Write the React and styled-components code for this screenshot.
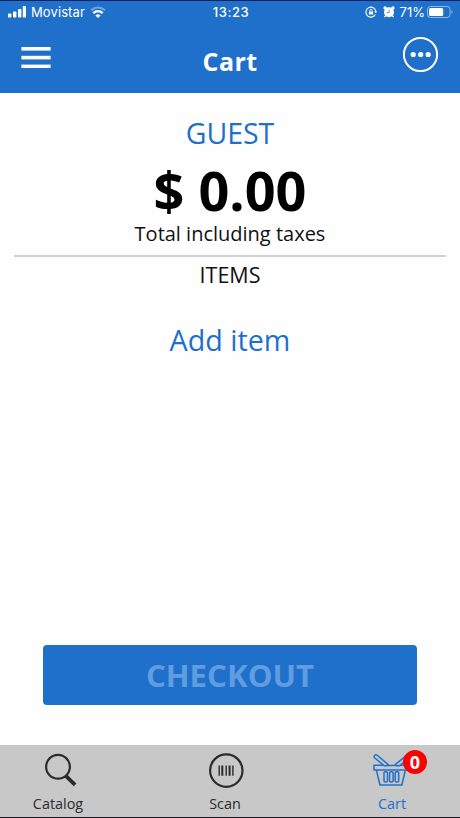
import React from 'react';
import styled, { createGlobalStyle } from 'styled-components'

const BLUE = '#1f70ca'

const GlobalStyle = createGlobalStyle`
  * {
    box-sizing: border-box;
  }

  body {
    margin: 0;
    background: #fff;
    font-family: "Open Sans", "Noto Sans", sans-serif;
  }
`

const Screen = styled.div`
  display: flex;
  flex-direction: column;
  width: 460px;
  height: 818px;
  overflow: hidden;
  background: #fefefe;
  border-top: 1px solid #10205a;
  border-bottom: 1px solid #1c1c1e;
`

const Header = styled.header`
  height: 92px;
  flex: none;
  background: ${BLUE};
  color: #fff;
`

const StatusBar = styled.div`
  display: grid;
  grid-template-columns: 1fr auto 1fr;
  align-items: center;
  height: 22px;
  padding: 0 6px 0 8px;
  font-family: Inter, sans-serif;
  font-size: 13px;
  line-height: 22px;
`

const StatusGroup = styled.div`
  display: flex;
  align-items: center;
  justify-content: ${({ $end }) => $end ? 'flex-end' : 'flex-start'};

  svg {
    display: block;
    flex: none;
  }
`

const StatusIcons = styled.div`
  display: flex;
  gap: 6px;
`

const Carrier = styled.span`
  margin: 0 5px 0 5px;
  letter-spacing: 0.1px;
`

const Clock = styled.span`
  font-weight: 500;
  letter-spacing: 0.55px;
`

const Percent = styled.span`
  margin: 0 2px 0 5px;
`

const NavBar = styled.div`
  display: grid;
  grid-template-columns: 1fr auto 1fr;
  align-items: start;
  padding: 13px 21px 0;
`

const IconButton = styled.button`
  display: block;
  margin-top: ${({ $top }) => $top || 0}px;
  padding: 0;
  border: 0;
  background: none;
  color: inherit;
  justify-self: ${({ $end }) => $end ? 'end' : 'start'};

  svg {
    display: block;
  }
`

const Title = styled.h1`
  margin: 8px 0 0;
  font-size: 25px;
  font-weight: 700;
  line-height: 34px;
  letter-spacing: 0.4px;
`

const Content = styled.main`
  display: flex;
  flex-direction: column;
  align-items: center;
  flex: 1;
  padding: 20px 14px 0;
`

const LinkText = styled.a`
  color: ${BLUE};
  font-size: ${({ $size }) => $size}px;
  line-height: 40px;
`

const Total = styled.div`
  margin-top: 7px;
  color: #000;
  font-size: 54px;
  font-weight: 700;
  line-height: 60px;
`

const Caption = styled.div`
  color: #111;
  font-size: ${({ $size }) => $size}px;
  line-height: 27px;
`

const Divider = styled.hr`
  width: 100%;
  height: 2px;
  margin: 8px 0 4px;
  border: 0;
  background: #d2d2d2;
`

const AddItem = styled.div`
  margin-top: 32px;
`

const Checkout = styled.button`
  width: 374px;
  height: 60px;
  margin: auto 0 40px;
  padding: 0;
  border: 0;
  border-radius: 4px;
  background: ${BLUE};
  color: #5f9ce0;
  font-family: inherit;
  font-size: 31.2px;
  font-weight: 700;
  line-height: 60px;
`

const TabBar = styled.nav`
  display: flex;
  gap: 67px;
  flex: none;
  height: 72px;
  padding: 0 8px;
  background: #c8c8c8;
`

const Tab = styled.div`
  position: relative;
  display: flex;
  flex-direction: column;
  align-items: center;
  width: 100px;
  padding-top: 7px;
  color: ${({ $active }) => $active ? BLUE : '#2b2b2b'};
  font-size: 14.4px;
  line-height: 20px;

  svg {
    display: block;
    margin-bottom: 6px;
  }
`

const Badge = styled.span`
  position: absolute;
  top: 5px;
  left: 61px;
  width: 24px;
  height: 24px;
  border-radius: 50%;
  background: #fe0000;
  color: #fff;
  font-size: 18px;
  font-weight: 700;
  line-height: 24px;
  text-align: center;
`

function SignalIcon() {
  return (
    <svg width="18" height="14" viewBox="0 0 18 14" fill="currentColor">
      <rect x="0" y="8.5" width="3.4" height="4" rx="0.8" />
      <rect x="5" y="6.5" width="3.4" height="6" rx="0.8" />
      <rect x="10" y="4" width="3.4" height="8.5" rx="0.8" />
      <rect x="14.8" y="1" width="3.2" height="11.5" rx="0.8" />
    </svg>
  )
}

function WifiIcon() {
  return (
    <svg width="16" height="14" viewBox="0 0 16 14" fill="none" stroke="currentColor" strokeWidth="2">
      <path d="M1 5.2a10.2 10.2 0 0 1 14 0" opacity="0.35" />
      <path d="M3.3 8.1a6.8 6.8 0 0 1 9.4 0" strokeWidth="2.3" />
      <path d="M8 13 5.4 10.4a3.8 3.8 0 0 1 5.2 0z" fill="currentColor" stroke="none" />
    </svg>
  )
}

function RotationLockIcon() {
  return (
    <svg width="12" height="12" viewBox="0 0 12 12" fill="none" stroke="currentColor">
      <path d="M10.3 8.6a5 5 0 1 1 .6-3.2" strokeWidth="1.1" />
      <path d="M9.2 5.2h2.8l-1.2 2z" fill="currentColor" stroke="none" />
      <rect x="3.9" y="5.4" width="4.2" height="3.2" rx="0.4" fill="currentColor" stroke="none" />
      <path d="M4.8 5.6V4.5a1.2 1.2 0 0 1 2.4 0v1.1" strokeWidth="0.9" />
    </svg>
  )
}

function AlarmIcon() {
  return (
    <svg width="12" height="12" viewBox="0 0 12 12" fill="currentColor">
      <circle cx="6" cy="6.3" r="5" />
      <circle cx="2.1" cy="2" r="1.7" />
      <circle cx="9.9" cy="2" r="1.7" />
      <path d="m2.7 9.6-1.2 1.6M9.3 9.6l1.2 1.6" stroke="currentColor" strokeWidth="1.4" />
      <path d="M6.2 3.6v3H3.8" fill="none" stroke={BLUE} strokeWidth="0.7" />
    </svg>
  )
}

function BatteryIcon() {
  return (
    <svg width="27" height="12" viewBox="0 0 27 12">
      <rect x="0.5" y="0.5" width="22.6" height="11" rx="3" fill="none" stroke="#fff" strokeOpacity="0.5" />
      <rect x="2" y="2" width="14.2" height="8" rx="1.5" fill="#fff" />
      <path d="M24.5 4.2c1.5.5 1.5 3.1 0 3.6z" fill="#fff" fillOpacity="0.5" />
    </svg>
  )
}

function MenuIcon() {
  return (
    <svg width="30" height="24" viewBox="0 0 30 24" fill="#fff">
      <rect x="0.4" y="1" width="29.2" height="3.6" />
      <rect x="0.4" y="9.8" width="29.2" height="3.6" />
      <rect x="0.4" y="18.6" width="29.2" height="3.4" />
    </svg>
  )
}

function MoreIcon() {
  return (
    <svg width="36" height="36" viewBox="0 0 36 36" fill="#fff">
      <circle cx="17.5" cy="18.5" r="16.6" fill="none" stroke="#fff" strokeWidth="2" />
      <circle cx="10.2" cy="18.5" r="2.6" />
      <circle cx="17.7" cy="18.5" r="2.6" />
      <circle cx="25.2" cy="18.5" r="2.6" />
    </svg>
  )
}

function SearchIcon() {
  return (
    <svg width="40" height="36" viewBox="0 0 40 36" fill="none" stroke="#2b2b2b">
      <circle cx="20" cy="14.8" r="11.9" strokeWidth="2.2" />
      <path d="m27.8 23.8 9.3 9" strokeWidth="3.8" />
    </svg>
  )
}

function ScanIcon() {
  return (
    <svg width="38" height="36" viewBox="0 0 38 36" fill="none" stroke="#2b2b2b">
      <circle cx="20.3" cy="18.6" r="16.2" strokeWidth="2.2" />
      <path d="M13.2 13.4v10.4M20.2 13.4v10.4M26.9 13.4v10.4" strokeWidth="1.4" />
      <path d="M16.3 13.4v10.4M23.6 13.4v10.4" strokeWidth="2" />
    </svg>
  )
}

function BasketIcon() {
  return (
    <svg width="38" height="36" viewBox="0 0 38 36" fill="none" stroke={BLUE} strokeWidth="1.5" strokeLinejoin="round">
      <path d="M10.3 13 1.8 6a1.8 1.8 0 0 1 2.4-2.7L15.2 12.6l-1.2 1.2h-2.8z" />
      <path d="M27.5 13 36 6a1.8 1.8 0 0 0-2.4-2.7L22.2 12.6l1.2 1.2h2.8z" />
      <path d="M10.3 13.2H1v4.9h33.8v-4.9h-7.3M15 13.6h7.4" />
      <path d="m3.4 18.1 3.6 14.9h21.8l3.6-14.9" />
      <rect x="11" y="19.8" width="3.5" height="10.2" rx="1.3" />
      <rect x="16.6" y="19.8" width="3.5" height="10.2" rx="1.3" />
      <rect x="22.2" y="19.8" width="3.5" height="10.2" rx="1.3" />
    </svg>
  )
}

export default function App() {
  const itemCount = 0

  return (
    <Screen>
      <GlobalStyle />
      <Header>
        <StatusBar>
          <StatusGroup>
            <SignalIcon />
            <Carrier>Movistar</Carrier>
            <WifiIcon />
          </StatusGroup>
          <Clock>13:23</Clock>
          <StatusGroup $end>
            <StatusIcons>
              <RotationLockIcon />
              <AlarmIcon />
            </StatusIcons>
            <Percent>71%</Percent>
            <BatteryIcon />
          </StatusGroup>
        </StatusBar>
        <NavBar>
          <IconButton $top={10} aria-label="Menu">
            <MenuIcon />
          </IconButton>
          <Title>Cart</Title>
          <IconButton $end aria-label="More">
            <MoreIcon />
          </IconButton>
        </NavBar>
      </Header>

      <Content>
        <LinkText $size={28.5}>GUEST</LinkText>
        <Total>$ 0.00</Total>
        <Caption $size={20}>Total including taxes</Caption>
        <Divider />
        <Caption $size={21.5}>ITEMS</Caption>
        <AddItem>
          <LinkText $size={28.7}>Add item</LinkText>
        </AddItem>
        <Checkout disabled>CHECKOUT</Checkout>
      </Content>

      <TabBar>
        <Tab>
          <SearchIcon />
          Catalog
        </Tab>
        <Tab>
          <ScanIcon />
          Scan
        </Tab>
        <Tab $active>
          <BasketIcon />
          Cart
          <Badge>{itemCount}</Badge>
        </Tab>
      </TabBar>
    </Screen>
  )
}
